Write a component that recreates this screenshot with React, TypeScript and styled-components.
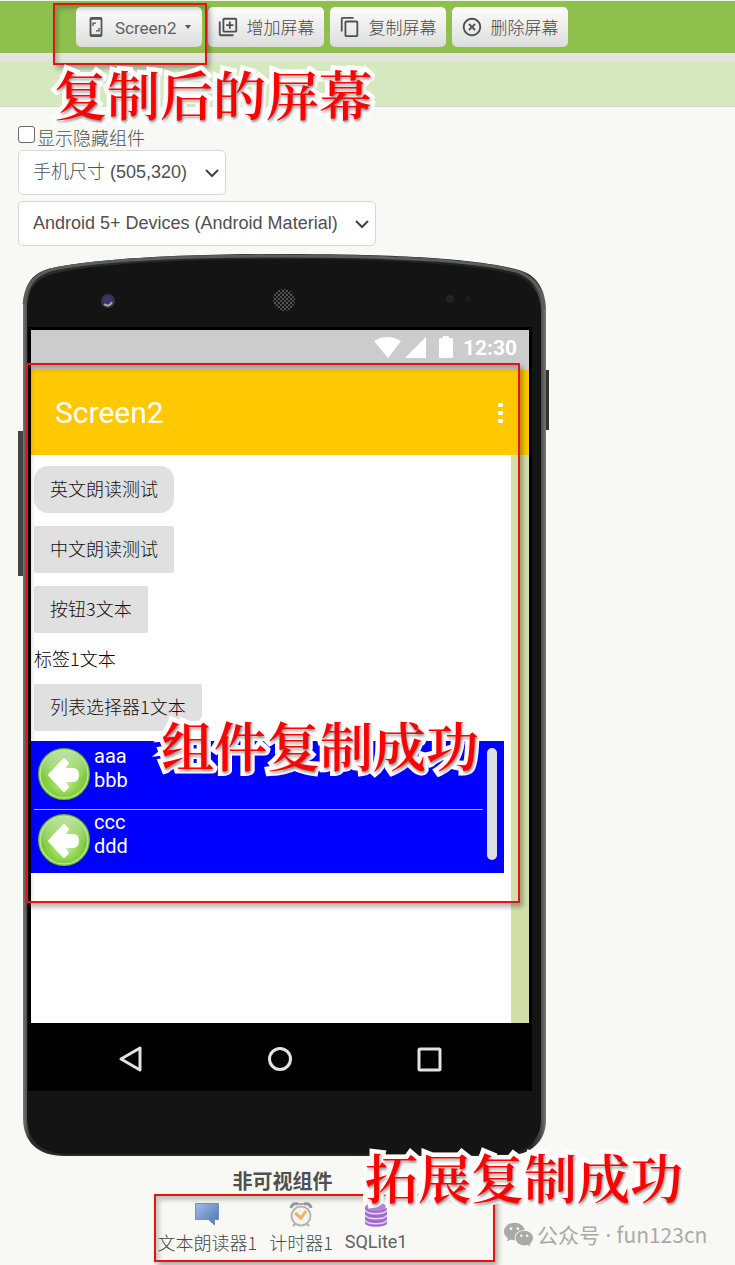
import React from "react";
import styled, { createGlobalStyle } from "styled-components";
import { MdContentCopy, MdHighlightOff, MdOutlineLibraryAdd } from "react-icons/md";
import { IoLogoWechat } from "react-icons/io5";

const cjk = '"Noto Sans CJK SC", sans-serif';

const GlobalStyle = createGlobalStyle`
  * { box-sizing: border-box; }
  body {
    margin: 0;
    background: #f8f9f4;
    color: #505050;
    font-family: Roboto, ${cjk};
    font-size: 18px;
    font-weight: 300;
    line-height: 24px;
  }
`;

const Page = styled.div`
  position: relative;
  overflow: hidden;
`;

const Toolbar = styled.header`
  display: flex;
  align-items: flex-start;
  gap: 6px;
  height: 53px;
  padding: 6px 0 0 76px;
  background: #8fc04d;
  border-top: 1px solid #eef5e2;
`;

const Divider = styled.div`
  height: 8px;
  background: #e5e3e0;
`;

const SubBar = styled.div`
  height: 46px;
  background: #d6e8c0;
  border-bottom: 1px solid #d3dccb;
`;

const ToolButton = styled.button`
  display: flex;
  align-items: center;
  gap: 8px;
  height: 40px;
  padding: 0 9px;
  border: 0;
  border-radius: 5px;
  background: linear-gradient(#fdfdfd, #dddddd);
  color: #505050;
  font: 300 17px/24px Roboto, ${cjk};
  white-space: nowrap;

  svg { flex: none; }
`;

const ToolLabel = styled.span<{ $latin?: boolean }>`
  padding-top: 2px;
  font-weight: ${(p) => (p.$latin ? 400 : 300)};
  color: ${(p) => (p.$latin ? "#606060" : "#484848")};
`;

const Caret = styled.span`
  width: 6px;
  margin-right: 2px;
  border: 3px solid transparent;
  border-top: 4px solid #555;
  border-bottom: 0;
`;

const Designer = styled.main`
  padding: 18px 18px 1px;
`;

const CheckRow = styled.label`
  display: flex;
  align-items: flex-start;
  gap: 2px;
  height: 25px;
  line-height: 28px;
`;

const CheckBox = styled.input`
  appearance: none;
  width: 17px;
  height: 17px;
  margin: 1px 0 0;
  border: 1px solid #6b6b6b;
  border-radius: 3px;
  background: #fff;
`;

const SelectStack = styled.div`
  display: flex;
  flex-direction: column;
  align-items: flex-start;
  gap: 6px;
  margin-bottom: 8px;
`;

const SelectBox = styled.div`
  display: grid;
  align-items: center;

  > * { grid-area: 1 / 1; }
  svg { justify-self: end; margin-right: 6px; pointer-events: none; }
`;

const Select = styled.select<{ $width: number }>`
  appearance: none;
  width: ${(p) => p.$width}px;
  height: 45px;
  padding: 0 32px 2px 14px;
  border: 1px solid #d8d9d6;
  border-radius: 5px;
  background: #fff;
  color: #505050;
  font: 300 18px "Liberation Sans", ${cjk};
`;

const Phone = styled.section`
  position: relative;
  width: 531px;
  height: 902px;
  padding: 73px 17px 0 10px;
`;

const Case = styled.svg`
  position: absolute;
  inset: 0;
`;

const Bezel = styled.div`
  position: relative;
  padding: 3px 3px 0;
  background: #000;
`;

const StatusBar = styled.div`
  display: flex;
  justify-content: flex-end;
  align-items: center;
  gap: 9px;
  height: 40px;
  padding: 0 12px 4px 0;
  background: #ccc;
  color: #fff;
  font-size: 21px;
  font-weight: 700;
`;

const TitleBar = styled.div`
  display: flex;
  align-items: center;
  justify-content: space-between;
  height: 85px;
  padding: 0 24px;
  background: #ffc800;
  color: #fff;
  font-size: 30px;
  font-weight: 400;
`;

const MoreButton = styled.button`
  display: grid;
  gap: 4px;
  padding: 0 2px;
  border: 0;
  background: none;

  span { width: 5px; height: 4px; border-radius: 1px; background: #fff; }
`;

const Canvas = styled.div`
  height: 568px;
  padding-top: 11px;
  background: #fff;
  border-right: 18px solid #d2e0a8;
`;

const Widgets = styled.div`
  display: flex;
  flex-direction: column;
  align-items: flex-start;
  gap: 13px;
  padding: 0 3px 10px;
`;

const AppButton = styled.button<{ $round?: boolean }>`
  height: 47px;
  padding: 0 16px 3px;
  border: 0;
  border-radius: ${(p) => (p.$round ? 14 : 2)}px;
  background: #e0e0e0;
  color: #111;
  font: 300 18px/24px ${cjk};
`;

const AppLabel = styled.span`
  height: 25px;
  color: #000;
  font-family: ${cjk};
`;

const ListView = styled.div`
  display: flex;
  align-items: flex-start;
  justify-content: space-between;
  width: 473px;
  height: 132px;
  padding: 2px 7px 0 3px;
  background: #00f;
`;

const List = styled.ul`
  width: 449px;
  margin: 0;
  padding: 0;
  list-style: none;
`;

const Item = styled.li`
  display: flex;
  gap: 4px;
  height: 66px;
  padding: 1px 0 0 4px;
  color: #fff;
  font-size: 20px;
  font-weight: 400;

  & + & { padding-top: 0; border-top: 1px solid #b3b3ff; }
  svg { margin-top: 4px; }
`;

const ScrollThumb = styled.div`
  width: 10px;
  height: 112px;
  margin-top: 5px;
  border-radius: 5px;
  background: #dcdfe2;
`;

const NavBar = styled.div`
  display: flex;
  justify-content: space-between;
  align-items: center;
  height: 68px;
  padding: 3px 86px 0 85px;
`;

const Hidden = styled.section`
  display: flex;
  flex-direction: column;
  align-items: center;
  width: 531px;
  padding: 13px 2px 0 0;
`;

const HiddenTitle = styled.h2`
  margin: 0 0 9px;
  font: 700 20px/24px ${cjk};
`;

const HiddenList = styled.div`
  display: flex;
  gap: 12px;
`;

const HiddenItem = styled.div<{ $latin?: boolean }>`
  display: flex;
  flex-direction: column;
  align-items: center;
  height: 62px;
  gap: 2px;
  color: ${(p) => (p.$latin ? "#626262" : "#484848")};
  font-weight: ${(p) => (p.$latin ? 400 : 300)};
  font-family: ${(p) => (p.$latin ? "Roboto, " : "")}${cjk};
`;

const Mark = styled.div<{ $x: number; $y: number; $w: number; $h: number }>`
  position: absolute;
  left: ${(p) => p.$x}px;
  top: ${(p) => p.$y}px;
  width: ${(p) => p.$w}px;
  height: ${(p) => p.$h}px;
  border: 2px solid #e01515;
  box-shadow: 3px 4px 5px rgba(0, 0, 0, 0.3), inset 3px 4px 5px rgba(0, 0, 0, 0.22);
  pointer-events: none;
`;

const Caption = styled.p<{ $x: number; $y: number }>`
  position: absolute;
  left: ${(p) => p.$x}px;
  top: ${(p) => p.$y}px;
  margin: 0;
  color: #fe0000;
  font: 600 53px/54px "Noto Serif CJK SC", ${cjk};
  white-space: nowrap;
  -webkit-text-stroke: 9px #fff;
  stroke-linejoin: round;
  paint-order: stroke fill;
  text-shadow: 1px 2px 3px rgba(0, 0, 0, 0.5);
  pointer-events: none;
`;

const Watermark = styled.div`
  position: absolute;
  left: 504px;
  top: 1220px;
  display: flex;
  align-items: center;
  gap: 4px;
  color: #a9aaa7;
  font: 400 21px/28px "Noto Sans", ${cjk};
  white-space: nowrap;
`;

const Latin = styled.span`
  font-family: ${cjk};
`;

const Chevron = () => (
  <svg width="16" height="12" viewBox="0 0 16 12" fill="none" stroke="#444" strokeWidth="2">
    <path d="M2 3l6 6 6-6" />
  </svg>
);

const PhoneIcon = () => (
  <svg width="22" height="22" viewBox="0 0 24 24" fill="#555">
    <path d="M17 1H7a2 2 0 0 0-2 2v18a2 2 0 0 0 2 2h10a2 2 0 0 0 2-2V3a2 2 0 0 0-2-2zm0 19H7V4h10v16zM9.500 8.500H12V7H8v4h1.500zM12 17h4v-4h-1.500v2.500H12z" />
  </svg>
);

const ArrowBall = ({ id }: { id: string }) => (
  <svg width="52" height="54" viewBox="0 0 52 54">
    <defs>
      <radialGradient id={id} cx="50%" cy="60%" r="60%">
        <stop offset="0" stopColor="#d4f5b4" />
        <stop offset="0.5" stopColor="#8fd44c" />
        <stop offset="1" stopColor="#62b32a" />
      </radialGradient>
      <linearGradient id={id + "s"} x2="0" y2="1">
        <stop offset="0" stopColor="#fff" stopOpacity="0.600" />
        <stop offset="0.600" stopColor="#fff" stopOpacity="0" />
      </linearGradient>
    </defs>
    <ellipse cx="26" cy="28" rx="25" ry="25" fill="#003" opacity="0.4" />
    <circle cx="26" cy="26" r="25" fill={`url(#${id})`} stroke="#6aae38" strokeWidth="2" />
    <circle cx="26" cy="26" r="24" fill={`url(#${id}s)`} stroke="#b8ec86" strokeWidth="1.500" />
    <path
      d="M11 27L26 11l4 4-4 6h9q5 0 5 6t-5 6h-9l4 6-4 4z"
      fill="#fff"
      stroke="#fff"
      strokeWidth="2"
      strokeLinejoin="round"
    />
  </svg>
);

const PhoneCase = () => (
  <Case width="531" height="902" viewBox="0 0 531 902">
    <defs>
      <linearGradient id="rim" x2="1" y2="0">
        <stop offset="0" stopColor="#777" />
        <stop offset="0.014" stopColor="#2b2b2b" />
        <stop offset="0.97" stopColor="#222" />
        <stop offset="0.990" stopColor="#4b4848" />
        <stop offset="1" stopColor="#777" />
      </linearGradient>
      <pattern id="mesh" width="4" height="4" patternUnits="userSpaceOnUse">
        <rect width="2" height="2" fill="#555" />
        <rect x="2" y="2" width="2" height="2" fill="#4c4c4c" />
      </pattern>
    </defs>
    <rect x="0" y="177" width="6" height="145" fill="#444" />
    <rect x="525" y="116" width="6" height="60" fill="#333" />
    <path
      d="M5 50C6 32 13 20 30 15C60 8 130 0 266 0S472 7 504 17C520 23 527 36 528 54V866C528 888 512 902 486 902H46C20 902 5 888 5 864Z"
      fill="url(#rim)"
    />
    <path
      d="M6 50C8 33 15 21 32 16C64 9 136 2 266 2S470 9 501 18C518 25 525 38 526 55"
      fill="none"
      stroke="#5c5e5c"
      strokeWidth="3"
    />
    <path
      d="M9 51C11 36 17 25 34 20C70 12 140 5 266 5S466 12 499 22C514 28 522 39 523 56V866C523 886 508 900 484 900H48C24 900 9 886 9 864Z"
      fill="#141414"
    />
    <circle cx="90" cy="47" r="7" fill="#353540" />
    <circle cx="90" cy="46" r="4" fill="#39347a" />
    <path d="M86 50q5 4 8-2" stroke="#aaa" strokeWidth="2" fill="none" />
    <circle cx="266" cy="46" r="11" fill="url(#mesh)" />
    <circle cx="432" cy="45" r="4" fill="#222126" />
    <circle cx="450" cy="45" r="3" fill="#1d1c20" />
  </Case>
);

const StatusIcons = () => (
  <svg width="80" height="24" viewBox="0 0 80 24" fill="#fff">
    <path d="M0 5Q13-3 27 5L14 22zM31 22L52 1v21zM66 2h3V0h6v2h3q1 0 1 2v17q0 1-1 1H66q-1 0-1-1V4q0-2 1-2z" />
  </svg>
);

const navStroke = { fill: "none", stroke: "#e2e2e2", strokeWidth: 3 };

const App = () => (
  <>
    <GlobalStyle />
    <Page>
      <Toolbar>
        <ToolButton>
          <PhoneIcon />
          <ToolLabel $latin>Screen2</ToolLabel>
          <Caret />
        </ToolButton>
        <ToolButton>
          <MdOutlineLibraryAdd size={22} />
          <ToolLabel>增加屏幕</ToolLabel>
        </ToolButton>
        <ToolButton>
          <MdContentCopy size={22} />
          <ToolLabel>复制屏幕</ToolLabel>
        </ToolButton>
        <ToolButton>
          <MdHighlightOff size={22} />
          <ToolLabel>删除屏幕</ToolLabel>
        </ToolButton>
      </Toolbar>
      <Divider />
      <SubBar />

      <Designer>
        <CheckRow>
          <CheckBox type="checkbox" />
          显示隐藏组件
        </CheckRow>
        <SelectStack>
          <SelectBox>
            <Select $width={208} aria-label="手机尺寸">
              <option>手机尺寸 (505,320)</option>
            </Select>
            <Chevron />
          </SelectBox>
          <SelectBox>
            <Select $width={358} aria-label="Android Devices">
              <option>Android 5+ Devices (Android Material)</option>
            </Select>
            <Chevron />
          </SelectBox>
        </SelectStack>

        <Phone>
          <PhoneCase />
          <Bezel>
            <StatusBar>
              <StatusIcons />
              12:30
            </StatusBar>
            <TitleBar>
              Screen2
              <MoreButton aria-label="菜单">
                <span />
                <span />
                <span />
              </MoreButton>
            </TitleBar>
            <Canvas>
              <Widgets>
                <AppButton $round>英文朗读测试</AppButton>
                <AppButton>中文朗读测试</AppButton>
                <AppButton>按钮3文本</AppButton>
                <AppLabel>标签1文本</AppLabel>
                <AppButton>列表选择器1文本</AppButton>
              </Widgets>
              <ListView>
                <List>
                  <Item>
                    <ArrowBall id="ballA" />
                    <div>
                      aaa
                      <br />
                      bbb
                    </div>
                  </Item>
                  <Item>
                    <ArrowBall id="ballB" />
                    <div>
                      ccc
                      <br />
                      ddd
                    </div>
                  </Item>
                </List>
                <ScrollThumb />
              </ListView>
            </Canvas>
            <NavBar>
              <svg width="28" height="28" viewBox="0 0 28 28" {...navStroke}>
                <path d="M24 3v22L5 14z" strokeLinejoin="round" />
              </svg>
              <svg width="28" height="28" viewBox="0 0 28 28" {...navStroke}>
                <circle cx="14" cy="14" r="10.500" />
              </svg>
              <svg width="28" height="28" viewBox="0 0 28 28" {...navStroke}>
                <rect x="4" y="4" width="21" height="21" rx="1" />
              </svg>
            </NavBar>
          </Bezel>
        </Phone>

        <Hidden>
          <HiddenTitle>非可视组件</HiddenTitle>
          <HiddenList>
            <HiddenItem>
              <svg width="24" height="26" viewBox="0 0 24 26">
                <defs>
                  <linearGradient id="talk" x2="1" y2="1">
                    <stop offset="0" stopColor="#a3bfe4" />
                    <stop offset="1" stopColor="#4673b3" />
                  </linearGradient>
                </defs>
                <path d="M0.500 1.500h23v16h-4V23l-6-5.500h-13z" fill="url(#talk)" stroke="#6f92c4" />
              </svg>
              文本朗读器1
            </HiddenItem>
            <HiddenItem>
              <svg width="24" height="26" viewBox="0 0 24 26" fill="none">
                <path d="M2 6q1-5 7-4M22 6q-1-5-7-4" stroke="#999" strokeWidth="3" />
                <path d="M4 24l3-3M20 24l-3-3M9 2h6" stroke="#aaa" strokeWidth="2" />
                <circle cx="12" cy="14" r="9.500" fill="#f3f3f1" stroke="#b5b5b3" strokeWidth="2" />
                <path d="M6 11l6 5 5-7" stroke="#f2b35d" strokeWidth="3" />
              </svg>
              计时器1
            </HiddenItem>
            <HiddenItem $latin>
              <svg width="24" height="26" viewBox="0 0 24 26">
                <path d="M1 5v16c0 5 22 5 22 0V5z" fill="#a06ccb" />
                <ellipse cx="12" cy="5" rx="11" ry="4" fill="#b084d6" />
                <path d="M1 8c2 5 20 5 22 0M1 13c2 5 20 5 22 0M1 18c2 5 20 5 22 0" fill="none" stroke="#ead9f5" strokeWidth="1.500" />
              </svg>
              SQLite1
            </HiddenItem>
          </HiddenList>
        </Hidden>
      </Designer>

      <Mark $x={53} $y={3} $w={154} $h={62} />
      <Mark $x={26} $y={363} $w={494} $h={540} />
      <Mark $x={154} $y={1194} $w={341} $h={68} />
      <Caption $x={54} $y={66}>复制后的屏幕</Caption>
      <Caption $x={161} $y={717}>组件复制成功</Caption>
      <Caption $x={365} $y={1149}>拓展复制成功</Caption>
      <Watermark>
        <IoLogoWechat size={29} />
        <span>
          公众号 · <Latin>fun123cn</Latin>
        </span>
      </Watermark>
    </Page>
  </>
);

export default App;
